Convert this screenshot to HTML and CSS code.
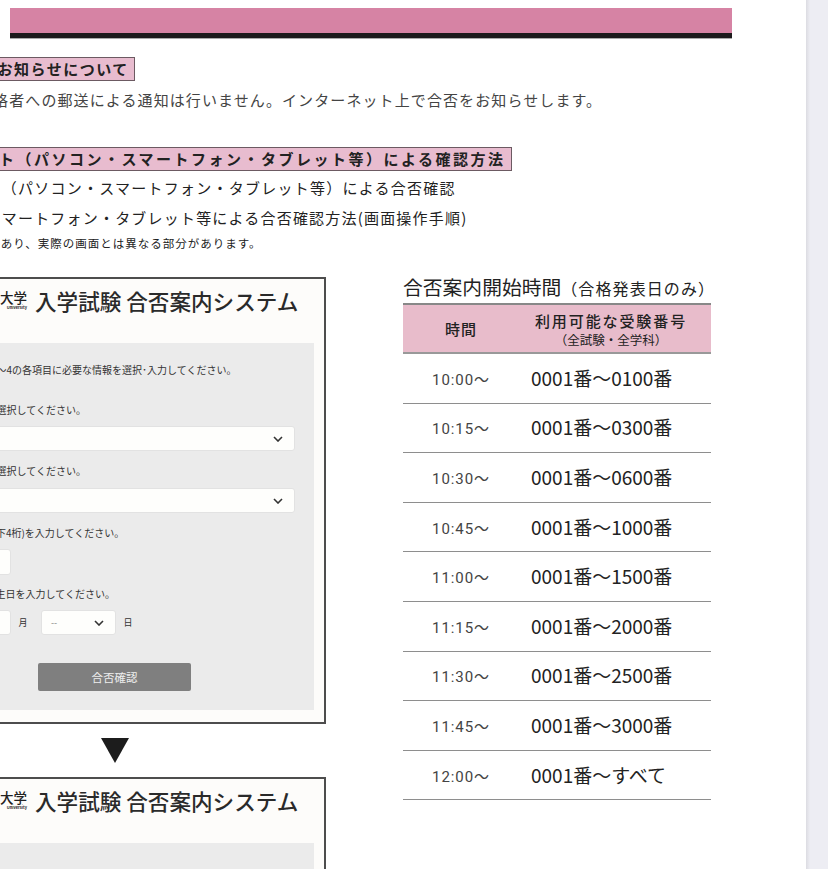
FILE: index.html
```html
<!DOCTYPE html>
<html lang="ja">
<head>
<meta charset="utf-8">
<title>合否案内</title>
<link rel="stylesheet" href="styles.css">
</head>
<body>
<main class="page">
  <div class="bar"></div>
  <div class="sheet">
    <h2 class="badge badge-a">合否のお知らせについて</h2>
    <p class="line line-a">合格者への郵送による通知は行いません。インターネット上で合否をお知らせします。</p>
    <h2 class="badge badge-b">インターネット（パソコン・スマートフォン・タブレット等）による確認方法</h2>
    <p class="line line-b">インターネット（パソコン・スマートフォン・タブレット等）による合否確認</p>
    <p class="line line-c">パソコン・スマートフォン・タブレット等による合否確認方法(画面操作手順)</p>
    <p class="line line-d">画面はイメージであり、実際の画面とは異なる部分があります。</p>
    <div class="columns">
      <div class="shots">
        <section class="card">
          <header class="card-head">
            <div class="logo"><span class="logo-name">○○大学</span><span class="logo-sub">University</span></div>
            <h3 class="card-title">入学試験 合否案内システム</h3>
          </header>
          <div class="panel">
            <p class="label lead">以下の1～4の各項目に必要な情報を選択･入力してください。</p>
            <p class="label label-1">1．試験を選択してください。</p>
            <div class="select select-wide"><svg class="chev" viewBox="0 0 10 6"><path d="M1 1l4 4 4-4"/></svg></div>
            <p class="label label-2">2．学科を選択してください。</p>
            <div class="select select-wide"><svg class="chev" viewBox="0 0 10 6"><path d="M1 1l4 4 4-4"/></svg></div>
            <p class="label label-3">3．受験番号(下4桁)を入力してください。</p>
            <div class="input"></div>
            <p class="label label-4">4．誕生日を入力してください。</p>
            <div class="date-row">
              <div class="select select-small"><span class="dash">--</span><svg class="chev" viewBox="0 0 10 6"><path d="M1 1l4 4 4-4"/></svg></div>
              <span class="unit">月</span>
              <div class="select select-small"><span class="dash">--</span><svg class="chev" viewBox="0 0 10 6"><path d="M1 1l4 4 4-4"/></svg></div>
              <span class="unit">日</span>
            </div>
            <div class="submit">合否確認</div>
          </div>
        </section>
        <div class="arrow"></div>
        <section class="card">
          <header class="card-head">
            <div class="logo"><span class="logo-name">○○大学</span><span class="logo-sub">University</span></div>
            <h3 class="card-title">入学試験 合否案内システム</h3>
          </header>
          <div class="panel panel-empty"></div>
        </section>
      </div>
      <aside class="times">
        <h3 class="times-title">合否案内開始時間<small class="times-note">（合格発表日のみ）</small></h3>
        <div class="times-table">
          <div class="head-row">
            <div class="head-time">時間</div>
            <div class="head-range">利用可能な受験番号<small class="head-sub">（全試験・全学科）</small></div>
          </div>
          <div class="row"><span class="time">10:00～</span><span class="range">0001番～0100番</span></div>
          <div class="row"><span class="time">10:15～</span><span class="range">0001番～0300番</span></div>
          <div class="row"><span class="time">10:30～</span><span class="range">0001番～0600番</span></div>
          <div class="row"><span class="time">10:45～</span><span class="range">0001番～1000番</span></div>
          <div class="row"><span class="time">11:00～</span><span class="range">0001番～1500番</span></div>
          <div class="row"><span class="time">11:15～</span><span class="range">0001番～2000番</span></div>
          <div class="row"><span class="time">11:30～</span><span class="range">0001番～2500番</span></div>
          <div class="row"><span class="time">11:45～</span><span class="range">0001番～3000番</span></div>
          <div class="row"><span class="time">12:00～</span><span class="range">0001番～すべて</span></div>
        </div>
      </aside>
    </div>
  </div>
</main>
<div class="gutter"></div>
</body>
</html>
```
FILE: styles.css
```css
* { box-sizing: border-box; }
html, body { height: 100%; margin: 0; overflow: hidden; }
body {
  display: flex;
  background: #fff;
  color: #222;
  font-family: "Noto Sans CJK JP", "Noto Sans", sans-serif;
}
h2, h3, p { margin: 0; font-weight: 400; }
small { font-size: inherit; }

.page { width: 806px; height: 869px; overflow: hidden; flex: none; }
.gutter {
  flex: 1;
  background: linear-gradient(90deg, #dcdce2 0, #ededf3 4px);
}

.bar {
  width: 722px;
  height: 30px;
  margin: 8px 0 0 10px;
  background: #d683a4;
  border-bottom: 5px solid #1d1a1c;
  box-shadow: 0 1px 0 #aaa;
}

.sheet { margin-left: -120px; width: 926px; }

.badge {
  width: max-content;
  height: 24px;
  padding: 0 5px;
  background: #e8bccf;
  border: 1px solid #6c5a62;
  font-size: 15px;
  font-weight: 700;
  line-height: 22px;
  white-space: nowrap;
}
.badge-a { margin: 19px 0 0 62px; letter-spacing: 1.5px; }
.badge-b { margin: 0 0 0 8px; letter-spacing: 2.5px; }

.line { white-space: nowrap; line-height: 22px; }
.line-a { margin: 8px 0 36px 97px; font-size: 15px; letter-spacing: 1.1px; color: #444; }
.line-b { margin: 6px 0 0 8px; font-size: 15px; letter-spacing: 1.25px; }
.line-c { margin: 8px 0 0 25px; font-size: 15px; letter-spacing: 1.2px; }
.line-d { margin: 3px 0 0 21px; font-size: 11.5px; letter-spacing: 1px; }

.columns { display: flex; gap: 77px; margin-top: 23px; align-items: flex-start; }

.shots { width: 422px; margin-left: 24px; flex: none; }
.card {
  background: #fdfcfa;
  border: 2px solid #4d4d4d;
  padding-bottom: 12px;
}
.card-head {
  height: 64px;
  padding: 0 0 22px 69px;
  display: flex;
  align-items: center;
  gap: 8px;
}
.logo { width: 52px; display: flex; flex-direction: column; align-items: flex-end; line-height: 1; }
.logo-name { font-size: 13.5px; font-weight: 500; white-space: nowrap; }
.logo-sub { font-size: 4px; font-weight: 700; margin-top: 1px; }
.card-title { font-size: 21.6px; font-weight: 500; white-space: nowrap; color: #2a2a2a; }

.panel {
  margin: 0 10px;
  padding: 20px 19px 19px 14px;
  background: #ebebeb;
}
.panel-empty { height: 60px; }

.label { font-size: 10px; line-height: 14px; white-space: nowrap; color: #333; }
.lead { margin-left: 31px; }
.label-1 { margin: 26px 0 0 21px; }
.label-2 { margin: 13px 0 0 21px; }
.label-3 { margin: 13px 0 0 7px; }
.label-4 { margin: 12px 0 0 40px; }

.select, .input {
  background: #fefefc;
  border: 1px solid #e2e2e2;
  border-radius: 3px;
}
.select { height: 25px; display: flex; align-items: center; justify-content: space-between; }
.select-wide { margin-top: 9px; justify-content: flex-end; padding-right: 11px; }
.label-2 + .select-wide { margin-top: 10px; }
.select-small { width: 75px; padding: 0 11px 0 9px; }
.input { width: 75px; height: 26px; margin: 9px 0 0 6px; }
.chev { width: 10px; height: 6px; fill: none; stroke: #333; stroke-width: 1.6; }
.dash { font-size: 9px; color: #888; }

.date-row { display: flex; align-items: center; margin: 9px 0 0 6px; }
.unit { width: 30px; padding-left: 7.5px; font-size: 9px; color: #333; }
.date-row .unit:last-child { width: 22px; }

.submit {
  width: 153px;
  height: 28px;
  margin: 28px 0 0 108px;
  background: #7f7f7f;
  border-radius: 2px;
  color: #eee;
  font-size: 11.5px;
  line-height: 28px;
  text-align: center;
}

.arrow {
  width: 28px;
  height: 25px;
  margin: 14px auto 14px;
  background: #1c1c1c;
  clip-path: polygon(0 0, 100% 0, 50% 100%);
}

.times { width: 308px; flex: none; }
.times-title {
  height: 26px;
  font-size: 19.8px;
  line-height: 20px;
  white-space: nowrap;
}
.times-note { font-size: 16px; letter-spacing: 1.1px; }
.times-table { border-top: 2px solid #888; }
.head-row {
  display: grid;
  grid-template-columns: 116px 1fr;
  height: 49px;
  background: #e8bccb;
  border-bottom: 2px solid #999;
  align-items: center;
  text-align: center;
}
.head-time { font-size: 15px; font-weight: 500; letter-spacing: 1px; }
.head-range {
  padding-right: 8px;
  font-size: 15px;
  font-weight: 500;
  letter-spacing: 1.9px;
  line-height: 21px;
  display: flex;
  flex-direction: column;
}
.head-sub { font-size: 12.5px; font-weight: 400; letter-spacing: 0; line-height: 17px; }
.row {
  display: grid;
  grid-template-columns: 116px 1fr;
  height: 49.6px;
  border-bottom: 1px solid #8e8e8e;
  align-items: center;
}
.time { text-align: center; font-family: "Roboto", "Noto Sans CJK JP", sans-serif; font-size: 15px; letter-spacing: .9px; color: #444; }
.range { padding-left: 12px; padding-bottom: 2px; font-size: 19px; color: #222; white-space: nowrap; }
```
